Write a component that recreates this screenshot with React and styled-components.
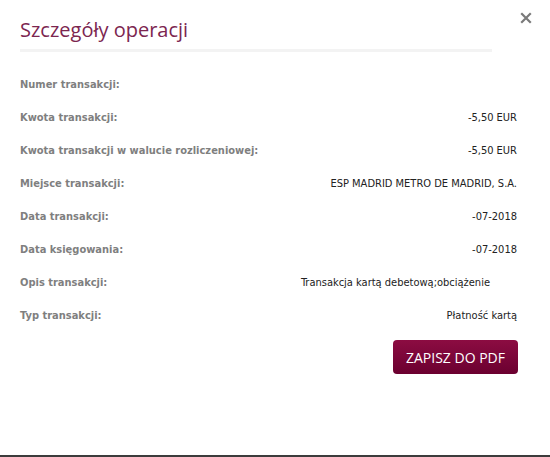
import styled, { createGlobalStyle } from "styled-components"

const Global = createGlobalStyle`
    html, body { margin:0; padding:0; background:#fff; }
    body { width:550px; height:457px; overflow:hidden; }
`

const Page = styled.div`
    display:flex;
    flex-direction:column;
    height:457px;
`

const Modal = styled.div`
    flex:1;
    padding:0 33px 0 20px;
    display:flex;
    flex-direction:column;
`

const Header = styled.div`
    display:flex;
    justify-content:space-between;
    align-items:flex-start;
    height:49px;
    margin-right:-33px;
    padding-right:17px;
    border-bottom:0;
`

const Title = styled.h1`
    margin:17px 0 0 0;
    font-family:"Open Sans", sans-serif;
    font-weight:400;
    font-size:20px;
    line-height:26px;
    color:#7c2650;
`

const Close = styled.button`
    margin-top:11px;
    border:none;
    background:none;
    padding:0;
    width:14px;
    height:14px;
    display:flex;
    cursor:pointer;
`

const Divider = styled.div`
    height:3px;
    width:472px;
    background:#f3f3f3;
    margin-bottom:16px;
`

const Row = styled.div`
    display:flex;
    justify-content:space-between;
    align-items:center;
    height:33px;
`

const Label = styled.span`
    font-family:"DejaVu Sans Condensed", "DejaVu Sans", sans-serif;
    font-weight:700;
    font-size:11px;
    color:#7f7f7f;
`

const Value = styled.span`
    font-family:"DejaVu Sans Condensed", "DejaVu Sans", sans-serif;
    font-size:11px;
    color:#222;
    padding-right:${p => p.$pad || 0}px;
`

const Actions = styled.div`
    display:flex;
    justify-content:flex-end;
    margin-top:8px;
    margin-right:-1px;
`

const Button = styled.button`
    width:125px;
    height:34px;
    border:none;
    border-radius:4px;
    background:linear-gradient(#8c0c42, #6b0030);
    color:#fff;
    font-family:"Open Sans", sans-serif;
    font-size:14px;
    cursor:pointer;
`

const Bottom = styled.div`
    height:2px;
    background:#3c3c3c;
`

const rows = [
    ["Numer transakcji:", ""],
    ["Kwota transakcji:", "-5,50 EUR"],
    ["Kwota transakcji w walucie rozliczeniowej:", "-5,50 EUR"],
    ["Miejsce transakcji:", "ESP MADRID METRO DE MADRID, S.A."],
    ["Data transakcji:", "-07-2018"],
    ["Data księgowania:", "-07-2018"],
    ["Opis transakcji:", "Transakcja kartą debetową;obciążenie", 27],
    ["Typ transakcji:", "Płatność kartą"],
]

const App = () => {
  return (
    <Page>
      <Global/>
      <Modal>
        <Header>
          <Title>Szczegóły operacji</Title>
          <Close aria-label="close">
            <svg width="14" height="14" viewBox="0 0 14 14">
              <path d="M3 3 L11 11 M11 3 L3 11" stroke="#7a7a7a" strokeWidth="2.2" strokeLinecap="square"/>
            </svg>
          </Close>
        </Header>
        <Divider/>
        {rows.map(([l, v, pad]) => (
          <Row key={l}>
            <Label>{l}</Label>
            <Value $pad={pad}>{v}</Value>
          </Row>
        ))}
        <Actions>
          <Button>ZAPISZ DO PDF</Button>
        </Actions>
      </Modal>
      <Bottom/>
    </Page>
  )
}

export default App
